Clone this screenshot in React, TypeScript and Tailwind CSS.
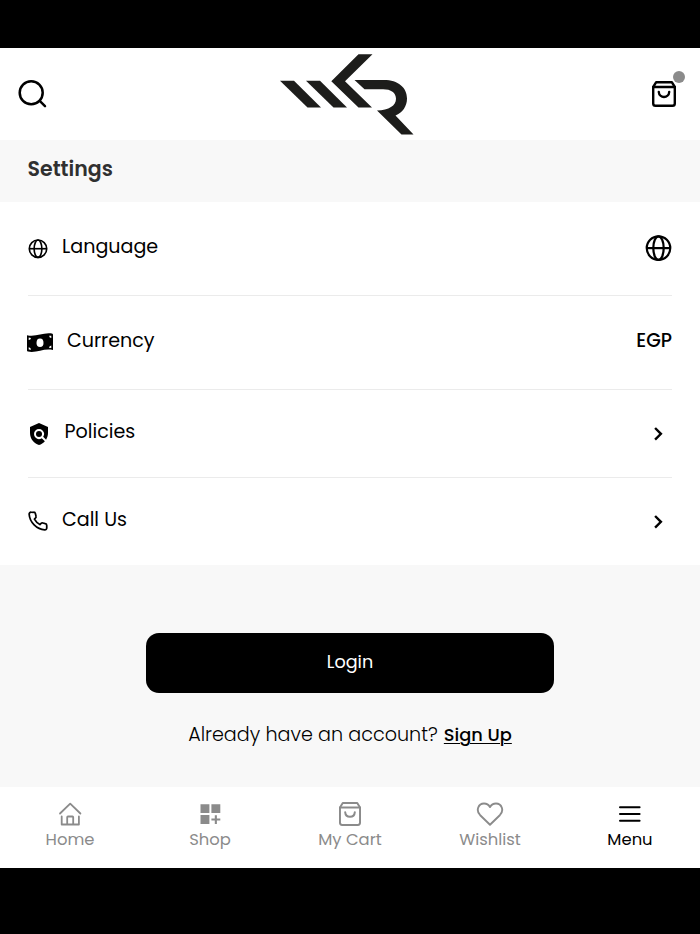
import React from "react";
import { MdPolicy } from "react-icons/md";

const Globe = ({ size, sw }: { size: number; sw: number }) => (
  <svg width={size} height={size} viewBox="0 0 28 28" fill="none" stroke="currentColor" strokeWidth={sw}>
    <circle cx="14" cy="13.6" r="12.2" />
    <ellipse cx="14" cy="13.6" rx="5.4" ry="12.2" />
    <path d="M2 13.6H26" />
  </svg>
);

const Bag = ({ size, sw }: { size: number; sw: number }) => (
  <svg width={size} height={size} viewBox="0 0 28 28" fill="none" stroke="currentColor" strokeWidth={sw} strokeLinejoin="round" strokeLinecap="round">
    <path d="M3.2 7V23.5Q3.2 25.8 5.5 25.8H22.5Q24.8 25.8 24.8 23.5V7L21.8 2.2H6.2Z" />
    <path d="M3.2 7H24.8M8.8 12C9.2 18.6 18.8 18.6 19.2 12" />
  </svg>
);

const Search = () => (
  <svg width="32" height="32" viewBox="0 0 32 32" fill="none" stroke="#000" strokeWidth="2.5" strokeLinecap="round">
    <circle cx="14.2" cy="14.7" r="11.5" />
    <path d="M22.7 22.9L28 28.1" />
  </svg>
);

const Logo = () => (
  <svg width="134" height="81" viewBox="280 53.5 134 81" fill="#1d1d1b">
    <path d="M280 80.2H294L321 107H307.5Z" />
    <path d="M306 80.2H320L347 107H333.5Z" />
    <path d="M358.5 53.8H372.5L345 80.7L372 107H358.5L331.3 80.7Z" />
    <path d="M354.5 79.5H384C398 79.5 407 87 407 98C407 106 402.5 112 395.5 115L413.5 134H401.5L377 110C389 110 396 105 396 98.3C396 92 391 88.7 383 88.7H364.5Z" />
  </svg>
);

const Chevron = () => (
  <svg className="mr-[8px]" width="12" height="16" viewBox="0 0 12 16" fill="none" stroke="#000" strokeWidth="2.4">
    <path d="M3.1 2L8.9 7.8L3.1 13.6" />
  </svg>
);

const Money = () => (
  <svg className="-ml-px mr-px" width="26" height="20" viewBox="0 0 26 20">
    <path d="M0 2.3C9 4.5 16-.9 25 .6Q26 .9 26 1.8V17.1C17 15 10 20.2 1 18.6Q0 18.3 0 17.4Z" fill="#000" />
    <ellipse cx="13" cy="9.8" rx="3.5" ry="4.3" fill="#fff" />
    <path d="M1.7 4.6L4 4.9Q3.8 6.8 1.7 7ZM24.3 2.7V5.1Q22.4 4.8 22.1 2.7ZM1.7 14.2Q3.8 14.6 4.1 16.8L1.7 16.6ZM24.3 12.5V15L21.9 14.8Q22.3 12.8 24.3 12.5Z" fill="#fff" />
  </svg>
);

const Phone = () => (
  <svg className="mb-px" width="20" height="20" viewBox="0 0 24 24" fill="none" stroke="#000" strokeWidth="2.1" strokeLinejoin="round">
    <path d="M22.5 17.3V20.4A2.2 2.2 0 0 1 20.1 22.6C10.5 22 2 13.5 1.4 3.9A2.2 2.2 0 0 1 3.6 1.5H6.8A2.1 2.1 0 0 1 8.9 3.3L9.6 6.2A2.2 2.2 0 0 1 9.1 8.3L7.7 9.7A17 17 0 0 0 14.3 16.3L15.7 14.9A2.2 2.2 0 0 1 17.8 14.4L20.7 15.2A2.2 2.2 0 0 1 22.5 17.3Z" />
  </svg>
);

const House = () => (
  <svg width="24" height="26" viewBox="0 0 24 26" fill="none" stroke="currentColor" strokeWidth="1.8" strokeLinecap="round" strokeLinejoin="round">
    <path d="M2 12.5L12.2 2.6L22.4 12.5M3.7 15.5V23.5H20.9V15.5M9.2 23.5V16.2Q9.2 15.5 9.9 15.5H14.5Q15.2 15.5 15.2 16.2V23.5" />
  </svg>
);

const Grid = () => (
  <svg width="24" height="26" viewBox="0 0 24 26" fill="currentColor">
    <path d="M2.5 3.2H11.4V12.1H2.5ZM13.4 3.2H22.3V12.1H13.4ZM2.5 14.1H11.4V23H2.5ZM16.8 14.2H18.9V17.5H22.3V19.6H18.9V23H16.8V19.6H13.4V17.5H16.8Z" />
  </svg>
);

const Heart = () => (
  <svg width="28" height="26" viewBox="0 0 28 26" fill="none" stroke="currentColor" strokeWidth="1.9" strokeLinejoin="round">
    <path d="M14 23.7L4.2 14.2C-.6 9.3 2.5 2.5 8 2.5C11 2.5 13 4.3 14 6.1C15 4.3 17 2.5 20 2.5C25.5 2.5 28.6 9.3 23.8 14.2Z" />
  </svg>
);

const Burger = () => (
  <svg width="24" height="26" viewBox="0 0 24 26" stroke="currentColor" strokeWidth="2" strokeLinecap="round">
    <path d="M2 6.2H21.6M2 13H21.6M2 19.8H21.6" />
  </svg>
);

const tabs = [
  { label: "Home", icon: <House />, cls: "text-[#8b8b8b]" },
  { label: "Shop", icon: <Grid />, cls: "text-[#8b8b8b]" },
  { label: "My Cart", icon: <Bag size={26} sw={2.1} />, cls: "text-[#8b8b8b]" },
  { label: "Wishlist", icon: <Heart />, cls: "text-[#8b8b8b]" },
  { label: "Menu", icon: <Burger />, cls: "text-black" },
];

export default function App() {
  return (
    <div className="flex h-[934px] w-[700px] flex-col overflow-hidden bg-black pt-[48px] font-['Poppins','Inter',sans-serif] text-black [&_svg]:shrink-0">
      <header className="flex h-[92px] items-center justify-between bg-white pl-[17px] pr-[22px]">
        <div className="w-[129px]"><Search /></div>
        <Logo />
        <div className="flex w-[130px] justify-end">
          <div className="relative">
            <Bag size={28} sw={2.4} />
            <span className="absolute -right-[6.5px] -top-[9.5px] h-[12px] w-[12px] rounded-full bg-[#8b8b8b]" />
          </div>
        </div>
      </header>
      <div className="flex h-[62px] items-center bg-[#f8f8f8] px-[27.5px] pb-[4px] text-[20.5px] font-semibold text-[#303030]">
        <h1>Settings</h1>
      </div>
      <main className="h-[363px] bg-white px-[28px]">
        <div className="flex h-[94px] items-center border-b border-[#ebebeb] text-[19.1px]">
          <Globe size={20} sw={2.3} />
          <span className="mb-[2px] ml-[14px] flex-1">Language</span>
          <Globe size={27} sw={2.3} />
        </div>
        <div className="flex h-[94px] items-center border-b border-[#ebebeb] text-[19.1px]">
          <Money />
          <span className="mb-[2px] ml-[13px] flex-1">Currency</span>
          <span className="mb-[2px] text-[18.9px] font-medium">EGP</span>
        </div>
        <div className="flex h-[88px] items-center border-b border-[#ebebeb] text-[19.1px]">
          <MdPolicy className="-ml-px mr-px h-[24px] w-[24px]" />
          <span className="mb-[2px] ml-[12.5px] flex-1">Policies</span>
          <Chevron />
        </div>
        <div className="flex h-[87px] items-center text-[19.1px]">
          <Phone />
          <span className="mb-[2px] ml-[14px] flex-1">Call Us</span>
          <Chevron />
        </div>
      </main>
      <section className="flex h-[222px] flex-col items-center bg-[#f8f8f8] pt-[68px]">
        <button className="flex h-[60px] w-[408px] items-center justify-center rounded-[13px] bg-black pb-[2px] text-[17.6px] text-white">Login</button>
        <p className="mt-[28px] flex items-baseline gap-[6px] whitespace-nowrap text-[19.15px] leading-[27px]">
          <span className="font-light">Already have an account?</span>
          <a className="text-[17.8px] font-medium underline decoration-1 underline-offset-[2px]">Sign Up</a>
        </p>
      </section>
      <nav className="flex h-[81px] bg-white pt-[14px]">
        {tabs.map((t) => (
          <div key={t.label} className={"flex flex-1 flex-col items-center " + t.cls}>
            {t.icon}
            <span className="mt-px text-[16.4px] leading-[24px]">{t.label}</span>
          </div>
        ))}
      </nav>
    </div>
  );
}
